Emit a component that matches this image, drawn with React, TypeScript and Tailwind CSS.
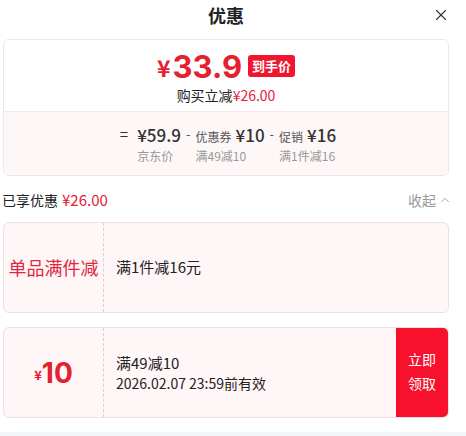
import { X, ChevronUp } from 'lucide-react'

const red = 'text-[#e5202f]'

function PriceCol({ label, sub, value }: { label?: string; sub: string; value: string }) {
  return (
    <div className="flex flex-col items-start">
      <div className="flex items-baseline h-[24px]">
        {label && <span className="text-[12px] text-[#555] mr-[4px]">{label}</span>}
        <span className="text-[17px] font-medium text-[#333]">{value}</span>
      </div>
      <span className="text-[12px] text-[#999] mt-[1px]">{sub}</span>
    </div>
  )
}

export default function App() {
  return (
    <div
      className="w-[466px] h-[436px] bg-white flex flex-col overflow-hidden"
      style={{ fontFamily: '"Noto Sans CJK SC", "Liberation Sans", sans-serif' }}
    >
      <div className="relative w-[452px] h-[30px] flex items-center justify-center">
        <span className="text-[18px] font-bold text-[#222]">优惠</span>
        <X className="absolute left-[432px] top-[6px] text-[#333]" size={18} strokeWidth={1.5} />
      </div>

      <div className="ml-[3px] mt-[9px] w-[446px] rounded-[6px] border border-[#f3e4e6] overflow-hidden">
        <div className="h-[71px] bg-white flex flex-col items-center pt-[10px]">
          <div className="flex items-center h-[32px]">
            <span className={`${red} text-[23px] font-bold mr-[2px] mt-[3px]`}>¥</span>
            <span
              className={`${red} text-[31px] font-bold leading-none`}
              style={{ fontFamily: 'Inter, "Liberation Sans", sans-serif' }}
            >
              33.9
            </span>
            <span className="ml-[6px] bg-[#f0162f] text-white text-[13px] font-bold rounded-[3px] px-[4px] h-[22px] flex items-center">
              到手价
            </span>
          </div>
          <div className="text-[14px] leading-[20px] text-[#222] mt-[3px]">
            购买立减<span className={red}>¥26.00</span>
          </div>
        </div>
        <div className="h-[64px] bg-[#fef7f7] border-t border-[#f7e8e9] flex justify-center pt-[10px]">
          <div className="flex items-start gap-[5px] pl-[4px]">
            <span className="text-[15px] text-[#333] h-[24px] leading-[24px] mr-[4px]">=</span>
            <PriceCol value="¥59.9" sub="京东价" />
            <span className="text-[13px] text-[#555] h-[24px] leading-[24px]">-</span>
            <PriceCol label="优惠券" value="¥10" sub="满49减10" />
            <span className="text-[13px] text-[#555] h-[24px] leading-[24px]">-</span>
            <PriceCol label="促销" value="¥16" sub="满1件减16" />
          </div>
        </div>
      </div>

      <div className="w-[452px] mt-[13px] h-[22px] flex items-center justify-between pl-[2px]">
        <div className="flex items-baseline">
          <span className="text-[14px] text-[#222]">已享优惠</span>
          <span className={`${red} text-[15px] ml-[4px]`}>¥26.00</span>
        </div>
        <div className="flex items-center text-[14px] text-[#999]">
          收起
          <ChevronUp size={14} strokeWidth={1.5} className="ml-[2px]" />
        </div>
      </div>

      <div className="ml-[3px] mt-[11px] w-[446px] h-[91px] rounded-[6px] border border-[#f1dfe2] bg-[#fef6f7] flex">
        <div className="w-[100px] flex items-center justify-center border-r border-dashed border-[#e5c9cd]">
          <span className="text-[18px] text-[#e2263f]">单品满件减</span>
        </div>
        <div className="flex items-center pl-[12px] text-[15px] text-[#222]">满1件减16元</div>
      </div>

      <div className="ml-[3px] mt-[14px] w-[446px] h-[91px] rounded-[6px] border border-[#f1dfe2] bg-[#fef6f7] flex overflow-hidden">
        <div className="w-[100px] flex items-center justify-center border-r border-dashed border-[#e5c9cd]">
          <span className={`${red} text-[13px] font-bold mt-[5px]`}>¥</span>
          <span
            className={`${red} text-[28px] font-bold`}
            style={{ fontFamily: 'Inter, "Liberation Sans", sans-serif' }}
          >
            10
          </span>
        </div>
        <div className="flex-1 flex flex-col justify-center pl-[12px] text-[#222]">
          <span className="text-[15px] leading-[20px]">满49减10</span>
          <span className="text-[14px] leading-[20px]">2026.02.07 23:59前有效</span>
        </div>
        <div className="w-[52px] bg-[#f7112c] flex items-center justify-center text-white text-[14px] leading-[24px] text-center pb-[4px]">
          立即
          <br />
          领取
        </div>
      </div>

      <div className="mt-auto h-[4px] bg-[#f4f5f9]" />
    </div>
  )
}
